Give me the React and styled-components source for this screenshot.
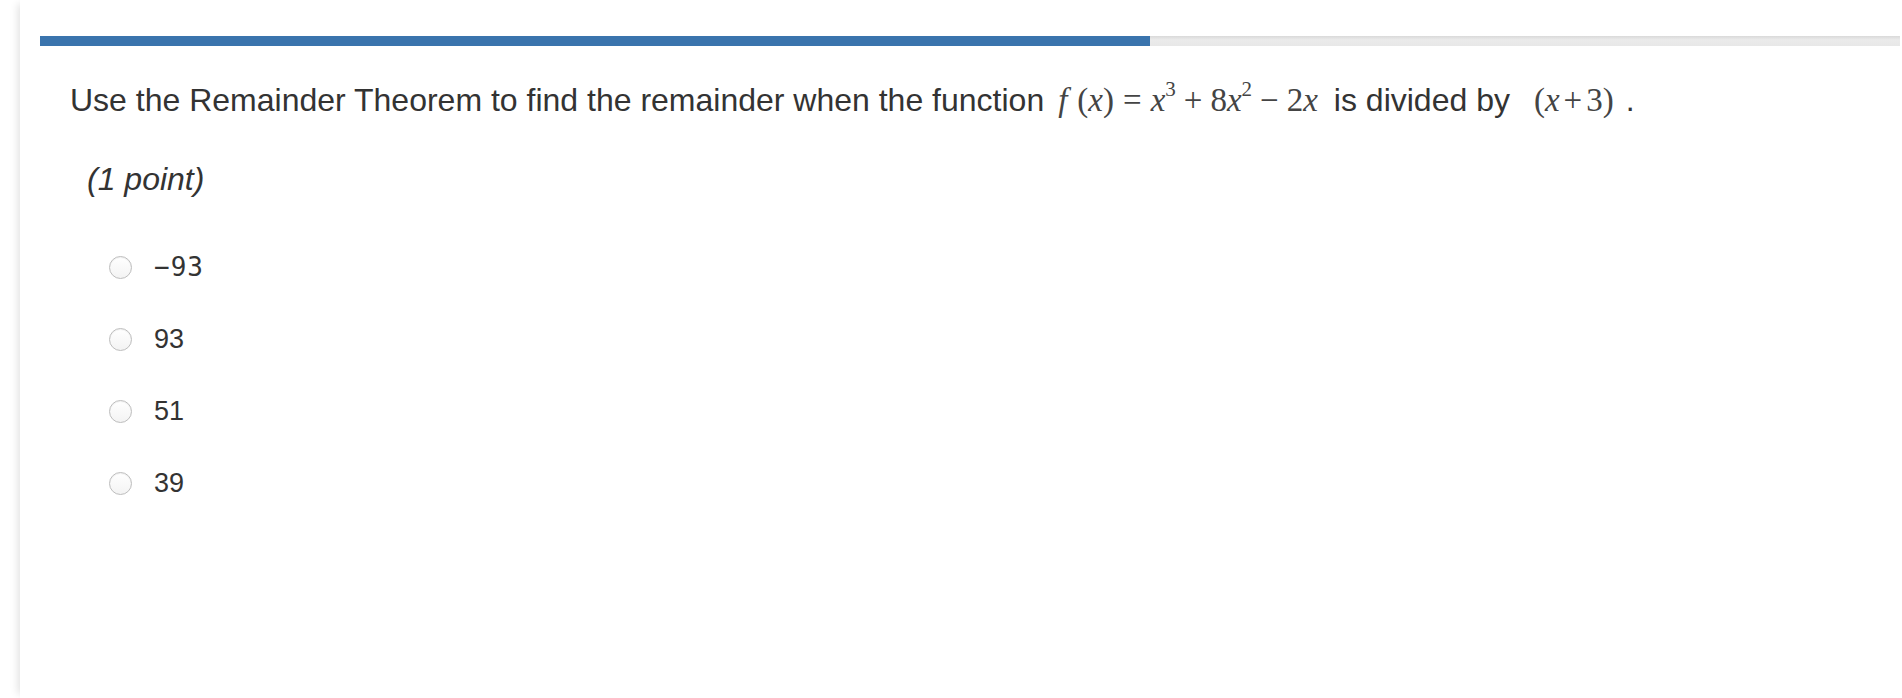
import React from 'react'
import styled, { createGlobalStyle } from 'styled-components'

const GlobalStyle = createGlobalStyle`
    html, body {
        margin: 0;
        padding: 0;
        background: #fff;
    }
    body {
        font-family: "Liberation Sans", Arial, sans-serif;
        color: #333;
    }
`

const Page = styled.div`
    min-height: 698px;
    padding-left: 20px;
    background: #fff;
`

const Panel = styled.div`
    min-height: 698px;
    padding: 36px 0 0 20px;
    box-shadow: -6px 0 8px -4px rgba(0, 0, 0, 0.12);
    box-sizing: border-box;
`

const Track = styled.div`
    height: 10px;
    margin-right: 2px;
    background: linear-gradient(to bottom, #d9d9d9, #ebebeb 40%, #e8e8e8);
`

const Fill = styled.div`
    height: 100%;
    background: #3a74ad;
`

const Question = styled.div`
    margin: 36px 0 0 30px;
    font-size: 32px;
    line-height: 36px;
    white-space: nowrap;
`

const Math = styled.span`
    font-family: "Liberation Serif", "Times New Roman", serif;
    font-size: 33px;
    color: #444;
    margin: 0 ${(p) => p.$right ?? 16}px 0 ${(p) => p.$left ?? 14}px;
    sup {
        font-size: 21px;
        line-height: 0;
        position: relative;
        top: -3px;
    }
`

const Var = styled.i`
    font-style: italic;
    margin-right: ${(p) => p.$after || 0}px;
`

const Op = styled.span`
    margin: 0 ${(p) => p.$space || 6}px;
`

const Points = styled.div`
    margin: 44px 0 0 47px;
    font-size: 32px;
    font-style: italic;
    line-height: 34px;
`

const Options = styled.div`
    display: flex;
    flex-direction: column;
    gap: 50px;
    margin: 60px 0 0 69px;
`

const Option = styled.label`
    display: flex;
    align-items: center;
    gap: 22px;
    height: 22px;
    font-size: 27px;
`

const Radio = styled.span`
    width: 21px;
    height: 21px;
    border-radius: 50%;
    border: 1px solid #bdbdbd;
    background: linear-gradient(to bottom, #fff, #f3f3f3);
    box-shadow: inset 0 1px 1px rgba(0, 0, 0, 0.06);
    flex-shrink: 0;
`

const Mono = styled.span`
    font-family: "DejaVu Sans Mono", "Liberation Mono", monospace;
    font-size: 26px;
    letter-spacing: 1px;
    color: #333;
`

const choices = [
    { text: '\u221293', mono: true },
    { text: '93' },
    { text: '51' },
    { text: '39' },
]

export default function App() {
    return (
        <Page>
            <GlobalStyle />
            <Panel>
                <Track>
                    <Fill style={{ width: '59.7%' }} />
                </Track>
                <Question>
                    Use the Remainder Theorem to find the remainder when the function
                    <Math>
                        <Var $after={10}>f</Var>(<Var>x</Var>)<Op $space={9}>=</Op><Var>x</Var><sup>3</sup>
                        <Op $space={8}>+</Op>8<Var>x</Var><sup>2</sup><Op $space={8}>&minus;</Op>2<Var>x</Var>
                    </Math>
                    is divided by
                    <Math $left={24} $right={12}>
                        (<Var>x</Var><Op $space={4}>+</Op>3)
                    </Math>
                    .
                </Question>
                <Points>(1 point)</Points>
                <Options>
                    {choices.map((c) => (
                        <Option key={c.text}>
                            <Radio />
                            {c.mono ? <Mono>{c.text}</Mono> : <span>{c.text}</span>}
                        </Option>
                    ))}
                </Options>
            </Panel>
        </Page>
    )
}
